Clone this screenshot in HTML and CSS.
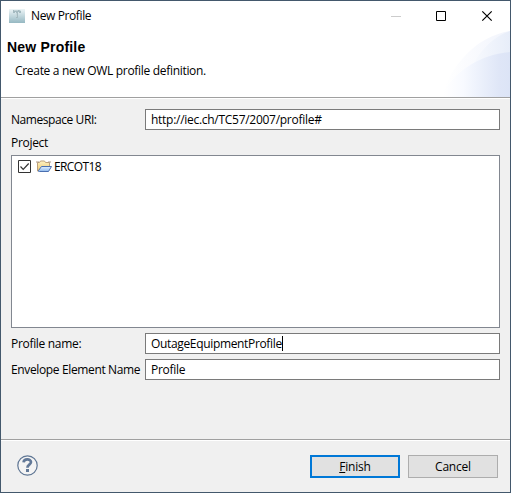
FILE: index.html
```html
<!DOCTYPE html>
<html lang="en">
<head>
<meta charset="utf-8">
<title>New Profile</title>
<link rel="stylesheet" href="styles.css">
</head>
<body>
<main class="window">
  <header class="banner">
    <svg class="arcs" width="72" height="67" viewBox="0 0 72 67" aria-hidden="true">
      <defs>
        <linearGradient id="outer" gradientUnits="userSpaceOnUse" x1="0" y1="0" x2="72" y2="0"><stop offset=".1" stop-color="#fff"/><stop offset="1" stop-color="#f1f4fc"/></linearGradient>
        <linearGradient id="middle" gradientUnits="userSpaceOnUse" x1="25" y1="0" x2="72" y2="0"><stop offset="0" stop-color="#fcfdff"/><stop offset="1" stop-color="#e7edf9"/></linearGradient>
        <linearGradient id="inner" gradientUnits="userSpaceOnUse" x1="0" y1="0" x2="72" y2="0"><stop offset=".08" stop-color="#fff"/><stop offset=".35" stop-color="#f8faff"/><stop offset=".6" stop-color="#ebf0fb"/><stop offset=".85" stop-color="#dfe6f7"/><stop offset="1" stop-color="#dce4f6"/></linearGradient>
      </defs>
      <path d="M2 67C15 34 37 7 72 1v66z" fill="url(#outer)"/>
      <path d="M23 67C31 33 48 9 72 1v66z" fill="url(#middle)"/>
      <path d="M2 67C16 42 40 25 72 22v45z" fill="url(#inner)"/>
    </svg>
    <div class="titlebar">
      <svg class="app-icon" width="16" height="14" viewBox="0 0 16 14" aria-hidden="true">
        <defs><linearGradient id="app" x2="0" y2="1"><stop offset="0" stop-color="#edf5f7"/><stop offset="1" stop-color="#96b8c2"/></linearGradient></defs>
        <path d="M0 0h16v14H0z" fill="url(#app)"/>
        <path d="M4 1h6l2 1v2h-2V3H9v6H7V3H6v1H4z" fill="#a4bac0"/>
        <path d="M5 1.5h4M7.5 4v4" stroke="#c3d3d7"/>
      </svg>
      <span class="title">New Profile</span>
      <svg class="controls" width="103" height="12" viewBox="0 0 103 12" fill="none" aria-hidden="true">
        <path d="M0 6.5h10" stroke="#ccc"/>
        <path d="M45.5 1.5h9v9h-9z" stroke="#000"/>
        <path d="M91.3 1.3l9.4 9.4m0-9.4l-9.4 9.4" stroke="#000" stroke-width="1.2"/>
      </svg>
    </div>
    <h1 class="heading">New Profile</h1>
    <p class="description">Create a new OWL profile definition.</p>
  </header>
  <section class="form">
    <div class="row">
      <span class="label namespace">Namespace URI:</span>
      <div class="field">http://iec.ch/TC57/2007/profile#</div>
    </div>
    <div class="label project">Project</div>
    <div class="list">
      <div class="item">
        <svg class="check" width="13" height="13" viewBox="0 0 13 13" fill="none" aria-hidden="true">
          <path d="M.5.5h12v12H.5z" fill="#fff" stroke="#333"/>
          <path d="M2.5 6.5l2.7 2.8L10.7 3.5" stroke="#333" stroke-width="1.2"/>
        </svg>
        <svg class="folder" width="16" height="13" viewBox="0 0 16 13" aria-hidden="true">
          <defs>
            <linearGradient id="back" x2="0" y2="1"><stop offset="0" stop-color="#fff3c4"/><stop offset="1" stop-color="#eac66f"/></linearGradient>
            <linearGradient id="front" x2="0" y2="1"><stop offset="0" stop-color="#e2f0ff"/><stop offset="1" stop-color="#8db8ed"/></linearGradient>
          </defs>
          <path d="M1.5 11V2.5h2l1-1.5h4l1 1.5h4V8z" fill="url(#back)" stroke="#bda078"/>
          <path d="M0 2h3M12 2h3" stroke="#ad9885"/>
          <path d="M5.5 6.5h10l-3 5h-9q-1.500 0-1-1z" fill="url(#front)" stroke="#4a6fb0"/>
        </svg>
        <span>ERCOT18</span>
      </div>
    </div>
    <div class="row">
      <span class="label">Profile name:</span>
      <div class="field value">OutageEquipmentProfile<i class="caret"></i></div>
    </div>
    <div class="row">
      <span class="label envelope">Envelope Element Name</span>
      <div class="field">Profile</div>
    </div>
  </section>
  <footer class="footer">
    <svg class="help" width="21" height="21" viewBox="0 0 21 21" fill="none" aria-hidden="true">
      <circle cx="10.5" cy="10.5" r="9.7" fill="#f4f4f4" stroke="#5f7694" stroke-width="1.2"/>
      <path d="M6.6 7.400C6.700 3.400 14 3.400 14 7.100c0 2.600-3.600 2.600-3.600 5.600" stroke="#637998" stroke-width="2.7"/>
      <path d="M9 14h3v3H9z" fill="#637998"/>
    </svg>
    <div class="button primary"><span><u>F</u>inish</span></div>
    <div class="button">Cancel</div>
  </footer>
</main>
</body>
</html>
```
FILE: styles.css
```css
* { box-sizing: border-box; }
body { margin: 0; font: 12px/16px "Open Sans", "Noto Sans", sans-serif; color: #000; }
.window { width: 511px; height: 493px; border: 1px solid #43586c; background: #f0f0f0; display: flex; flex-direction: column; overflow: hidden; }
.banner { position: relative; height: 97px; flex: none; background: #fff; border-bottom: 1px solid #a0a0a0; box-shadow: 0 1px #fff; white-space: nowrap; }
.arcs { position: absolute; right: 0; bottom: 0; display: block; }
.titlebar { height: 29px; display: flex; align-items: center; padding: 0 16px 0 8px; }
.app-icon { margin-top: 1px; }
.title { margin-left: 6px; letter-spacing: -.38px; }
.controls { margin-left: auto; }
.heading { margin: 9px 0 0 6px; font: bold 14px/17px "Liberation Sans", Arial, sans-serif; letter-spacing: .2px; }
.description { margin: 7px 0 0 14px; letter-spacing: -.31px; }
.form { height: 341px; flex: none; padding: 11px 10px 0; white-space: nowrap; }
.row { display: grid; grid-template-columns: 134px 355px; height: 21px; align-items: center; }
.row + .row { margin-top: 5px; }
.label { letter-spacing: -.31px; }
.namespace { letter-spacing: -.43px; }
.envelope { letter-spacing: -.36px; }
.field { height: 21px; border: 1px solid #7a7a7a; background: #fff; padding-left: 5px; display: flex; align-items: center; letter-spacing: -.28px; }
.value { letter-spacing: -.34px; }
.caret { width: 1px; height: 15px; background: #000; }
.project { height: 16px; margin: 5px 0 4px; }
.list { height: 173px; width: 489px; background: #fff; border: 1px solid #828790; margin-bottom: 5px; padding: 3px 0 0 6px; }
.item { display: flex; height: 16px; align-items: center; letter-spacing: -.6px; }
.check { margin-bottom: 1px; }
.folder { margin: 0 2px 1px 5px; }
.footer { flex: 1; border-top: 1px solid #a0a0a0; box-shadow: inset 0 1px #fff; display: flex; align-items: flex-start; gap: 8px; padding: 15px 12px 0 16px; }
.help { margin-right: auto; }
.button { width: 90px; height: 23px; background: #e1e1e1; border: 1px solid #adadad; display: flex; align-items: center; justify-content: center; letter-spacing: -.2px; }
.primary { border: 2px solid #0078d7; }
```
